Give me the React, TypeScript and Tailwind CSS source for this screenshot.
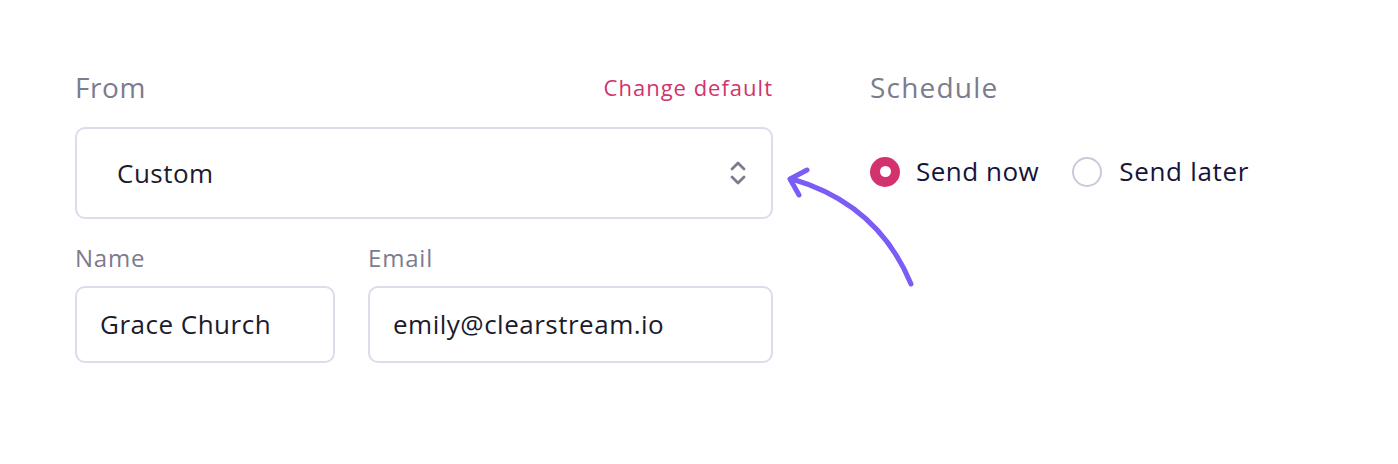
import React from 'react';

const font = { fontFamily: '"Open Sans", Lato, sans-serif' };

export default function App() {
  return (
    <div className="relative h-[464px] w-[1398px] bg-white" style={font}>
      <div className="flex gap-[97px] pl-[75px] pt-[70px]">
        {/* From column */}
        <div className="flex w-[698px] flex-col">
          <div className="flex items-center justify-between">
            <span className="text-[28px] leading-[34px] tracking-[0.6px] text-[#7d7b8e]">From</span>
            <a className="text-[22px] leading-[34px] tracking-[1px] text-[#d2336e]">Change default</a>
          </div>
          <div className="mt-[23px] flex h-[92px] items-center justify-between rounded-[10px] border-2 border-[#dcdcec] pl-[40px] pr-[24px]">
            <span className="text-[26px] tracking-[0.5px] text-[#1b1b2c]">Custom</span>
            <svg width="18" height="26" viewBox="0 0 18 26" fill="none" stroke="#7d7b8e" strokeWidth="2.8" strokeLinecap="round" strokeLinejoin="round">
              <path d="M3 9 L9 3 L15 9" />
              <path d="M3 17 L9 23 L15 17" />
            </svg>
          </div>
          <div className="mt-[24px] flex gap-[33px]">
            <div className="flex w-[260px] flex-col">
              <span className="text-[24px] leading-[30px] tracking-[0.8px] text-[#7d7b8e]">Name</span>
              <div className="mt-[13px] flex h-[77px] items-center rounded-[10px] border-2 border-[#dcdcec] pl-[23px]">
                <span className="text-[26px] tracking-[0.5px] text-[#1b1b2c]">Grace Church</span>
              </div>
            </div>
            <div className="flex flex-1 flex-col">
              <span className="text-[24px] leading-[30px] tracking-[0.8px] text-[#7d7b8e]">Email</span>
              <div className="mt-[13px] flex h-[77px] items-center rounded-[10px] border-2 border-[#dcdcec] pl-[23px]">
                <span className="text-[26px] tracking-[0.5px] text-[#1b1b2c]">emily@clearstream.io</span>
              </div>
            </div>
          </div>
        </div>

        {/* Schedule column */}
        <div className="flex flex-col">
          <span className="text-[28px] leading-[34px] tracking-[1.2px] text-[#7d7b8e]">Schedule</span>
          <div className="mt-[48px] flex items-center">
            <span className="flex h-[30px] w-[30px] items-center justify-center rounded-full bg-[#d2336e]">
              <span className="h-[11px] w-[11px] rounded-full bg-white" />
            </span>
            <span className="ml-[16px] text-[26px] tracking-[0.5px] text-[#15143a]">Send now</span>
            <span className="ml-[33px] h-[30px] w-[30px] rounded-full border-2 border-[#cacadc]" />
            <span className="ml-[17px] text-[26px] tracking-[0.7px] text-[#15143a]">Send later</span>
          </div>
        </div>
      </div>

      {/* Annotation arrow */}
      <svg className="absolute left-0 top-0" width="1398" height="464" fill="none" stroke="#7b5cf4" strokeWidth="5" strokeLinecap="round" strokeLinejoin="round">
        <path d="M911 284 Q 878 204 792 179" />
        <path d="M807 170 L790 179 L799 195" />
      </svg>
    </div>
  );
}
